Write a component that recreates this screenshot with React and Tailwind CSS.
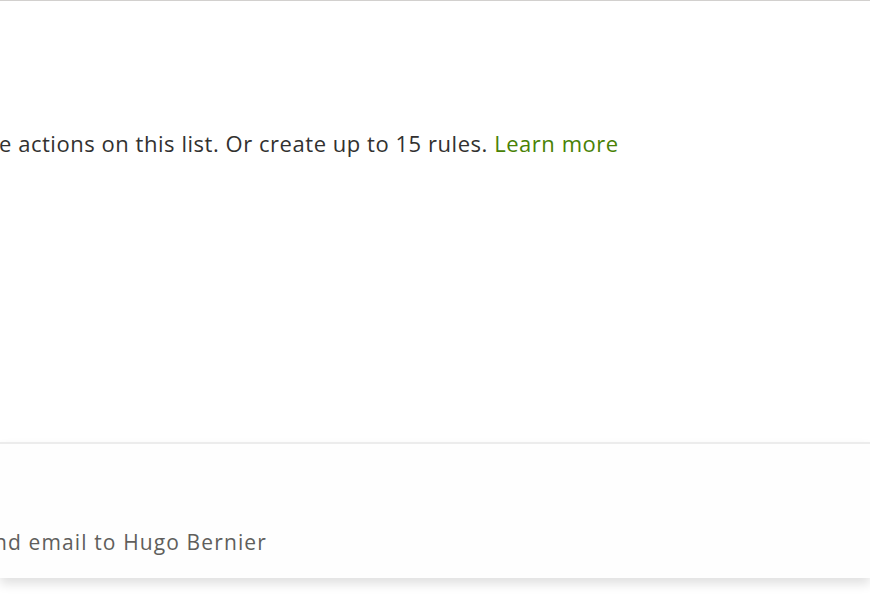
export default function App() {
  return (
    <div className="w-[870px] h-[600px] overflow-hidden bg-white border-t border-[#d2d0ce] font-['Open_Sans','Noto_Sans',sans-serif]">
      <div className="h-[441px] pt-[126px]">
        <p className="ml-[-1px] whitespace-nowrap text-[22px] tracking-[0.54px] leading-[32px] text-[#323130]">
          e actions on this list. Or create up to 15 rules.{' '}
          <a className="text-[#498205]">Learn more</a>
        </p>
      </div>
      <div className="h-[136px] border-t-2 border-[#ececec] bg-[#fefefe] shadow-[0_6px_10px_rgba(0,0,0,0.12)] flex items-end pb-[21px]">
        <p className="ml-[-6px] whitespace-nowrap text-[21px] tracking-[1.12px] leading-[30px] text-[#605e5c]">
          nd email to Hugo Bernier
        </p>
      </div>
    </div>
  );
}
